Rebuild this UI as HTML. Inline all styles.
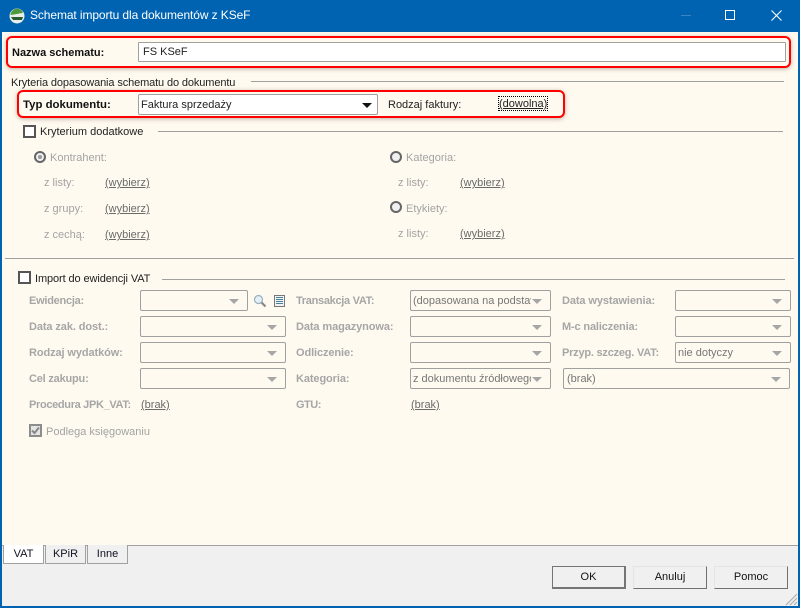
<!DOCTYPE html>
<html lang="pl"><head><meta charset="utf-8"><title>Schemat importu</title>
<style>
html,body{margin:0;padding:0}
body{width:800px;height:608px;position:relative;overflow:hidden;background:#0063b1;font:11px "Liberation Sans",sans-serif;color:#111}
div,span,a{position:absolute;box-sizing:border-box;white-space:nowrap}
.t{line-height:14px;margin-top:1px}
.g{color:#a3a3a3}
.gb{color:#a6a6a6;font-weight:bold;letter-spacing:-.1px}
.l{color:#6b6b6b;text-decoration:underline;text-underline-offset:1px}
.line{height:1px;background:#a0a0a0}
.cb{width:13px;height:13px;background:#fff;border:2px solid #555}
.s{background:#fffaf0;border:1px solid #a0a0a0;border-radius:2px;height:21px;line-height:21px;padding-left:2px;color:#777;overflow:hidden}
.s:after{content:"";position:absolute;right:8px;top:8px;border-left:5px solid transparent;border-right:5px solid transparent;border-top:5px solid #a6a6a6}
.red{border:2px solid #f00;border-radius:6px;box-shadow:0 1px 5px rgba(90,70,50,.4)}
.r{width:12px;height:12px;border-radius:50%;border:2px solid #666;background:#f0f0f0}
.tab{top:545px;height:19px;border:1px solid #a0a0a0;border-top:0;text-align:center;line-height:18px;background:#f0f0f0;color:#112}
.b{top:566px;width:74px;height:23px;background:#f0f0f0;border:1px solid;border-color:#e4e4e4 #707070 #707070 #e4e4e4;text-align:center;line-height:21px;color:#111}
</style></head><body>
<div style="left:2px;top:32px;width:796px;height:513px;background:#fffaf0"></div>
<div style="left:2px;top:545px;width:796px;height:61px;background:#f0f0f0;border-top:1px solid #a0a0a0"></div>

<svg style="position:absolute;left:9px;top:8px" width="16" height="16" viewBox="0 0 16 16"><circle cx="8" cy="8" r="7.5" fill="#e8efe8"/><path d="M1.5 7C2 3 5 .8 8 .8s5 1.500 6 4L8 6z" fill="#4d9a3a"/><path d="M2 9h12l-1 3H4z" fill="#2c5a33"/></svg>
<div style="left:30px;top:8px;color:#fff;font-size:12px;line-height:15px;letter-spacing:-.1px">Schemat importu dla dokumentów z KSeF</div>
<div style="left:681px;top:15px;width:10px;height:1px;background:#3c84c4"></div>
<div style="left:725px;top:10px;width:10px;height:10px;border:1px solid #fff"></div>
<svg style="position:absolute;left:771px;top:10px" width="11" height="11"><path d="M.5.5l10 10M10.500.5l-10 10" stroke="#fff" stroke-width="1.100" fill="none"/></svg>

<div class="red" style="left:6px;top:36px;width:785px;height:32px"></div>
<div class="t" style="left:12px;top:45px;font-weight:bold">Nazwa schematu:</div>
<div style="left:138px;top:42px;width:648px;height:20px;background:#fff;border:1px solid #a0a0a0;border-radius:1px;line-height:19px;padding-left:4px;color:#222">FS KSeF</div>

<div class="t" style="left:11px;top:75px;color:#222;letter-spacing:-.12px">Kryteria dopasowania schematu do dokumentu</div>
<div class="line" style="left:251px;top:81px;width:533px"></div>
<div class="red" style="left:17px;top:90px;width:548px;height:28px"></div>
<div class="t" style="left:23px;top:97px;font-weight:bold;font-size:11.4px">Typ dokumentu:</div>
<div style="left:138px;top:94px;width:240px;height:21px;background:#fff;border:1px solid #a0a0a0;border-radius:2px;line-height:21px;padding-left:2px;color:#222">Faktura sprzedaży</div>
<div style="left:362px;top:103px;border-left:5px solid transparent;border-right:5px solid transparent;border-top:5px solid #111"></div>
<div class="t" style="left:388px;top:97px;color:#222">Rodzaj faktury:</div>
<div style="left:499px;top:97px;text-decoration:underline;color:#222;outline:1px dotted #000;height:13px;width:48px;line-height:14px;overflow:visible">(dowolna)</div>

<div class="cb" style="left:23px;top:125px"></div>
<div class="t" style="left:40px;top:124px;color:#222">Kryterium dodatkowe</div>
<div class="line" style="left:158px;top:131px;width:625px"></div>

<div class="r" style="left:34px;top:151px"></div><div style="left:38px;top:155px;width:4px;height:4px;border-radius:50%;background:#999"></div>
<div class="t g" style="left:50px;top:150px">Kontrahent:</div>
<div class="t g" style="left:44px;top:175px">z listy:</div><a class="t l" style="left:105px;top:175px">(wybierz)</a>
<div class="t g" style="left:44px;top:201px">z grupy:</div><a class="t l" style="left:105px;top:201px">(wybierz)</a>
<div class="t g" style="left:44px;top:227px">z cechą:</div><a class="t l" style="left:105px;top:227px">(wybierz)</a>

<div class="r" style="left:390px;top:151px"></div>
<div class="t g" style="left:406px;top:150px">Kategoria:</div>
<div class="t g" style="left:398px;top:175px">z listy:</div><a class="t l" style="left:460px;top:175px">(wybierz)</a>
<div class="r" style="left:390px;top:201px"></div>
<div class="t g" style="left:406px;top:201px">Etykiety:</div>
<div class="t g" style="left:398px;top:226px">z listy:</div><a class="t l" style="left:460px;top:226px">(wybierz)</a>

<div class="line" style="left:5px;top:258px;width:789px"></div>

<div class="cb" style="left:18px;top:271px"></div>
<div class="t" style="left:35px;top:271px;color:#222;letter-spacing:-.1px">Import do ewidencji VAT</div>
<div class="line" style="left:162px;top:279px;width:623px"></div>

<div class="t gb" style="left:29px;top:293px;letter-spacing:-.25px">Ewidencja:</div>
<div class="t gb" style="left:29px;top:319px">Data zak. dost.:</div>
<div class="t gb" style="left:29px;top:345px">Rodzaj wydatków:</div>
<div class="t gb" style="left:29px;top:371px;letter-spacing:-.2px">Cel zakupu:</div>
<div class="t gb" style="left:29px;top:397px;letter-spacing:-.33px">Procedura JPK_VAT:</div>
<a class="t l" style="left:141px;top:397px">(brak)</a>

<div class="s" style="left:140px;top:290px;width:108px"></div>
<svg style="position:absolute;left:253px;top:294px" width="14" height="14" viewBox="0 0 14 14"><circle cx="5.500" cy="5.500" r="4" fill="#e4f0f5" stroke="#9ab0bb" stroke-width="1.200"/><path d="M8.500 8.500l4 4" stroke="#888" stroke-width="2.200"/></svg>
<svg style="position:absolute;left:274px;top:295px" width="11" height="12" viewBox="0 0 11 12"><rect x=".5" y=".5" width="10" height="11" fill="#f2f4f4" stroke="#777"/><path d="M2 2.500h7M2 4.500h7M2 6.500h7M2 8.500h7" stroke="#4a7f9a"/></svg>
<div class="s" style="left:140px;top:316px;width:146px"></div>
<div class="s" style="left:140px;top:342px;width:146px"></div>
<div class="s" style="left:140px;top:368px;width:146px"></div>

<div class="t gb" style="left:296px;top:293px;letter-spacing:-.3px">Transakcja VAT:</div>
<div class="t gb" style="left:296px;top:319px">Data magazynowa:</div>
<div class="t gb" style="left:296px;top:345px">Odliczenie:</div>
<div class="t gb" style="left:296px;top:371px">Kategoria:</div>
<div class="t gb" style="left:296px;top:397px;letter-spacing:-.5px">GTU:</div>

<div class="s" style="left:410px;top:290px;width:141px"><span style="left:2px;top:0;width:118px;overflow:hidden">(dopasowana na podstawie</span></div>
<div class="s" style="left:410px;top:316px;width:141px"></div>
<div class="s" style="left:410px;top:342px;width:141px"></div>
<div class="s" style="left:410px;top:368px;width:141px"><span style="left:2px;top:0;width:118px;overflow:hidden">z dokumentu źródłowego</span></div>
<a class="t l" style="left:411px;top:397px">(brak)</a>

<div class="t gb" style="left:562px;top:293px">Data wystawienia:</div>
<div class="t gb" style="left:562px;top:319px;letter-spacing:-.15px">M-c naliczenia:</div>
<div class="t gb" style="left:562px;top:345px;letter-spacing:-.22px">Przyp. szczeg. VAT:</div>
<div class="s" style="left:675px;top:290px;width:116px"></div>
<div class="s" style="left:675px;top:316px;width:116px"></div>
<div class="s" style="left:675px;top:342px;width:116px">nie dotyczy</div>
<div class="s" style="left:563px;top:368px;width:227px;padding-left:3px">(brak)</div>

<div style="left:29px;top:424px;width:13px;height:13px;background:#e4e4e4;border:2px solid #8c8c8c"></div>
<svg style="position:absolute;left:31px;top:426px" width="9" height="9"><path d="M1 4.500l2.500 2.500L8 1.500" stroke="#888" stroke-width="2" fill="none"/></svg>
<div class="t g" style="left:46px;top:424px">Podlega księgowaniu</div>

<div class="tab" style="left:3px;width:41px;background:#fff">VAT</div>
<div class="tab" style="left:45px;width:41px">KPiR</div>
<div class="tab" style="left:87px;width:41px">Inne</div>

<div class="b" style="left:552px;border-color:#757575;border-right-width:2px;border-bottom-width:2px">OK</div>
<div class="b" style="left:633px">Anuluj</div>
<div class="b" style="left:714px">Pomoc</div>
<svg style="position:absolute;left:785px;top:593px" width="13" height="13"><path d="M12 1L1 12M12 5L5 12M12 9L9 12" stroke="#aaa" stroke-width="1.100"/></svg>
</body></html>
